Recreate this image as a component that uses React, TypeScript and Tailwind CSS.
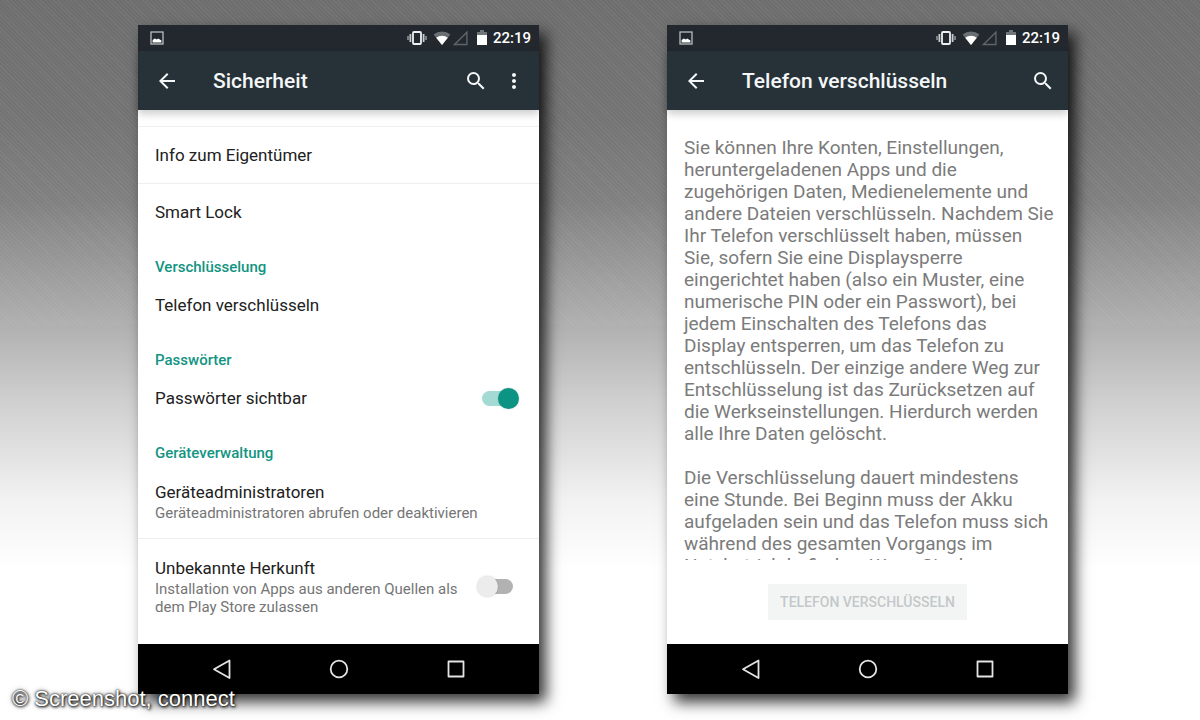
import { useState } from 'react';
import type { ReactNode } from 'react';
import { MdArrowBack, MdMoreVert, MdSearch } from 'react-icons/md';

function StatusBar() {
  return (
    <div className="flex h-[26px] items-center justify-between bg-[#22282e] pl-3 pr-2 text-white">
      <svg viewBox="0 0 14 14" className="size-[14px]" aria-hidden="true">
        <rect x="1" y="1" width="12" height="12" fill="none" stroke="#b9bdc1" strokeWidth="1.3" />
        <path d="M2.6 11.4V9l2.200-1.600 2 1 1.400-.9 3.200 1.900v2z" fill="#fff" />
      </svg>
      <div className="flex items-center">
        <svg viewBox="0 0 20 16" className="mr-[6px] h-4 w-5" aria-hidden="true">
          <rect x="6" y="2" width="8" height="12" rx="1" fill="none" stroke="#eef0f2" strokeWidth="1.8" />
          <path d="M3.400 4v8M16.600 4v8" stroke="#c9cccf" strokeWidth="1.8" />
          <path d="M1 6v4M19 6v4" stroke="#9da1a5" strokeWidth="1.4" />
        </svg>
        <svg viewBox="0 0 18 16" className="mr-[2px] h-4 w-[18px]" aria-hidden="true">
          <path d="M9 15 .6 4.600a13 13 0 0 1 16.800 0z" fill="#6a6f73" />
          <path d="M9 15 3.200 7.800a9.400 9.400 0 0 1 11.600 0z" fill="#fff" />
        </svg>
        <svg viewBox="0 0 16 16" className="mr-[7px] size-4" aria-hidden="true">
          <path d="M1.500 14.500h12.400V2.200z" fill="none" stroke="#5e6468" strokeWidth="1.4" />
        </svg>
        <svg viewBox="0 0 12 16" className="mr-[5px] h-4 w-3" aria-hidden="true">
          <path d="M4 0h4v2h3v4H1V2h3z" fill="#70757a" />
          <path d="M1 5h10v10H1z" fill="#fff" />
        </svg>
        <span className="text-[15px] font-medium leading-5">22:19</span>
      </div>
    </div>
  );
}

function AppBar({ title, menu = false }: { title: string; menu?: boolean }) {
  return (
    <header className="relative flex h-[59px] items-center bg-[#263238] pl-[17px] pr-[13px] text-[#f4f6f7] shadow-[0_4px_8px_rgba(0,0,0,0.2)]">
      <button type="button" aria-label="Zurück" className="mr-[34px]">
        <MdArrowBack className="size-6" />
      </button>
      <h1 className="flex-1 text-[21px] font-medium leading-7">{title}</h1>
      <button type="button" aria-label="Suchen">
        <MdSearch className="size-6" />
      </button>
      {menu && (
        <button type="button" aria-label="Weitere Optionen" className="ml-[14px]">
          <MdMoreVert className="size-6" />
        </button>
      )}
    </header>
  );
}

function NavBar() {
  return (
    <nav className="flex h-[50px] items-center justify-center gap-[93px] bg-black text-[#e4e4e4]">
      <button type="button" aria-label="Zurück">
        <svg viewBox="0 0 24 24" className="size-6" fill="none" stroke="currentColor" strokeWidth="1.8" strokeLinejoin="round">
          <path d="M19.500 3.500v17.500L4 12.200z" />
        </svg>
      </button>
      <button type="button" aria-label="Startbildschirm">
        <svg viewBox="0 0 24 24" className="size-6" fill="none" stroke="currentColor" strokeWidth="1.8">
          <circle cx="12" cy="12" r="8.300" />
        </svg>
      </button>
      <button type="button" aria-label="Übersicht">
        <svg viewBox="0 0 24 24" className="size-6" fill="none" stroke="currentColor" strokeWidth="1.8" strokeLinejoin="round">
          <rect x="4.500" y="4.500" width="15" height="15" />
        </svg>
      </button>
    </nav>
  );
}

function Phone({ title, menu, children }: { title: string; menu?: boolean; children: ReactNode }) {
  return (
    <section className="flex min-w-0 flex-1 flex-col bg-white shadow-[7px_8px_14px_rgba(0,0,0,0.8)]">
      <StatusBar />
      <AppBar title={title} menu={menu} />
      {children}
      <NavBar />
    </section>
  );
}

function Category({ children }: { children: ReactNode }) {
  return <h2 className="flex h-[37px] items-end px-[17px] text-[15px] font-medium leading-5 text-[#129482]">{children}</h2>;
}

function Row({ title, divider = false }: { title: string; divider?: boolean }) {
  return (
    <button
      type="button"
      className={
        divider
          ? 'flex h-[57px] w-full items-center border-b border-[#eeeeee] px-[17px] text-left text-[17px] leading-6'
          : 'flex h-14 w-full items-center px-[17px] text-left text-[17px] leading-6'
      }
    >
      {title}
    </button>
  );
}

function Switch({ id, initial }: { id: string; initial: boolean }) {
  const [on, setOn] = useState(initial);
  return (
    <input
      id={id}
      type="checkbox"
      role="switch"
      checked={on}
      onChange={() => setOn(!on)}
      className="relative h-[15px] w-[34px] shrink-0 appearance-none rounded-full bg-[#b2b2b2] before:absolute before:-left-[2px] before:-top-[3px] before:size-[21px] before:rounded-full before:bg-[#ececec] before:shadow-[0_0_2px_rgba(0,0,0,0.2)] checked:bg-[#a3dbd4] checked:before:left-4 checked:before:bg-[#0b9483]"
    />
  );
}

function SecurityScreen() {
  return (
    <main className="flex-1 pb-5 pt-4 text-[#212121]">
      <div className="border-t border-[#eeeeee]">
        <Row title="Info zum Eigentümer" divider />
        <Row title="Smart Lock" />
      </div>
      <Category>Verschlüsselung</Category>
      <Row title="Telefon verschlüsseln" />
      <Category>Passwörter</Category>
      <div className="flex h-14 items-center justify-between pl-[17px] pr-[23px]">
        <label htmlFor="show-passwords" className="text-[17px] leading-6">
          Passwörter sichtbar
        </label>
        <Switch id="show-passwords" initial />
      </div>
      <Category>Geräteverwaltung</Category>
      <button type="button" className="block w-full border-b border-[#eeeeee] px-[17px] pb-4 pt-[17px] text-left">
        <span className="block text-[17px] leading-6">Geräteadministratoren</span>
        <span className="block text-[15px] leading-[18px] text-[#757575]">Geräteadministratoren abrufen oder deaktivieren</span>
      </button>
      <div className="flex items-center justify-between pb-2 pl-[17px] pr-[26px] pt-[17px]">
        <label htmlFor="unknown-sources" className="w-[310px]">
          <span className="block text-[17px] leading-6">Unbekannte Herkunft</span>
          <span className="block text-[15px] leading-[18px] text-[#757575]">
            Installation von Apps aus anderen Quellen als dem Play Store zulassen
          </span>
        </label>
        <Switch id="unknown-sources" initial={false} />
      </div>
    </main>
  );
}

function EncryptScreen() {
  return (
    <main className="flex min-h-0 flex-1 flex-col">
      <div className="min-h-0 flex-1 basis-0 overflow-hidden whitespace-pre-line pl-[17px] pr-3 pt-[27px] text-[19px] leading-[22px] text-[#7b7b7b]">
        <p className="mb-[22px]">
          {`Sie können Ihre Konten, Einstellungen,
heruntergeladenen Apps und die
zugehörigen Daten, Medienelemente und
andere Dateien verschlüsseln. Nachdem Sie
Ihr Telefon verschlüsselt haben, müssen
Sie, sofern Sie eine Displaysperre
eingerichtet haben (also ein Muster, eine
numerische PIN oder ein Passwort), bei
jedem Einschalten des Telefons das
Display entsperren, um das Telefon zu
entschlüsseln. Der einzige andere Weg zur
Entschlüsselung ist das Zurücksetzen auf
die Werkseinstellungen. Hierdurch werden
alle Ihre Daten gelöscht.`}
        </p>
        <p>
          {`Die Verschlüsselung dauert mindestens
eine Stunde. Bei Beginn muss der Akku
aufgeladen sein und das Telefon muss sich
während des gesamten Vorgangs im
Netzbetrieb befinden. Wenn Sie den`}
        </p>
      </div>
      <div className="flex justify-center pb-6 pt-6">
        <button type="button" disabled className="h-9 bg-[#f3f5f5] px-3 text-sm font-medium text-[#c3c8c8]">
          TELEFON VERSCHLÜSSELN
        </button>
      </div>
    </main>
  );
}

export default function App() {
  return (
    <div className="relative min-h-screen bg-[linear-gradient(to_bottom,#6e6e6e_0px,#747474_120px,#808080_200px,#aaaaaa_310px,#cfcfcf_400px,#f2f2f2_500px,#ffffff_570px)] font-[Roboto,sans-serif]">
      <div className="absolute inset-x-0 top-0 h-[325px] bg-[repeating-linear-gradient(45deg,rgba(255,255,255,0.05)_0px,rgba(255,255,255,0.05)_1px,transparent_1px,transparent_3px)]" />
      <div className="relative flex gap-32 pb-[26px] pl-[138px] pr-[132px] pt-[25px]">
        <Phone title="Sicherheit" menu>
          <SecurityScreen />
        </Phone>
        <Phone title="Telefon verschlüsseln">
          <EncryptScreen />
        </Phone>
      </div>
      <p className="absolute bottom-[7px] left-3 font-['Liberation_Sans',Arial,sans-serif] text-[22px] leading-7 text-white [text-shadow:0_0_2px_#000,1px_1px_3px_#000,0_0_5px_rgba(0,0,0,0.6)]">
        © Screenshot, connect
      </p>
    </div>
  );
}
